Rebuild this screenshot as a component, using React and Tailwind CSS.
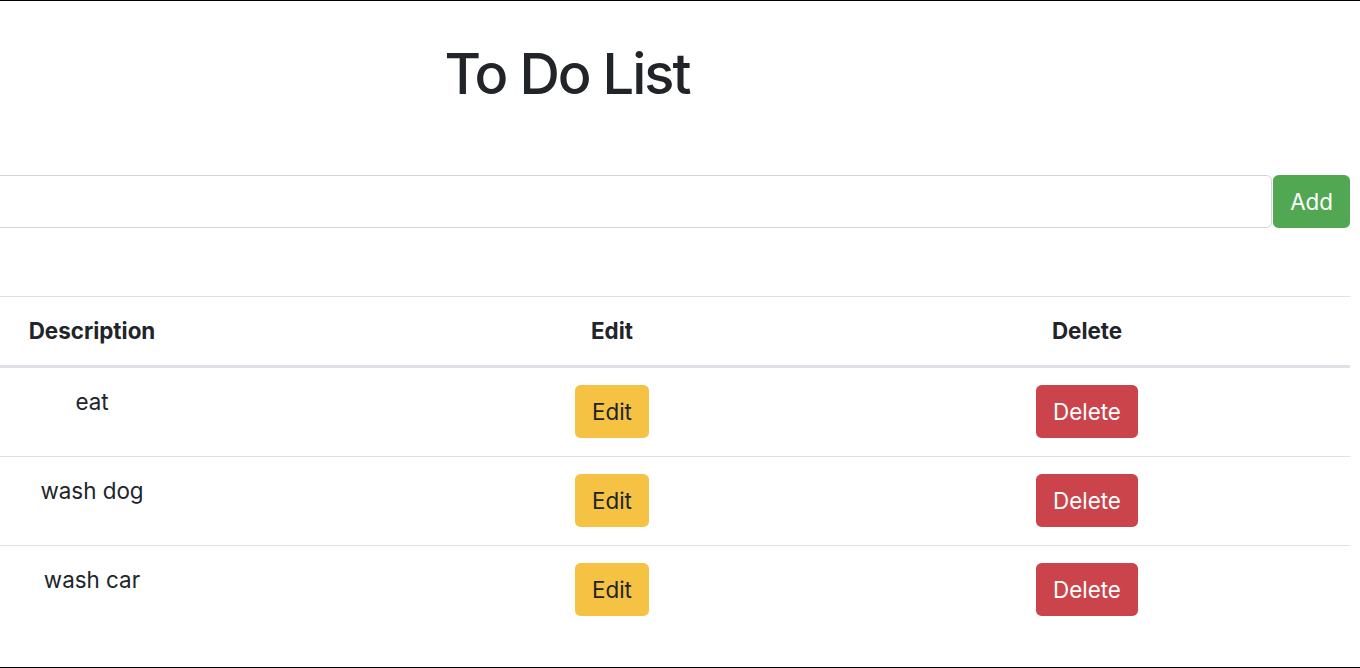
import React from 'react';

const todos = ['eat', 'wash dog', 'wash car'];

export default function App() {
  return (
    <div
      className="h-[668px] w-[1360px] overflow-hidden border-y border-black bg-white text-[#212529]"
      style={{ fontFamily: 'Inter, "Liberation Sans", sans-serif' }}
    >
      <div className="ml-[-216px] w-[1566px]">
        <h1 className="mt-[40px] text-center text-[56px] font-medium leading-[1.2] tracking-[-2px]">To Do List</h1>

        <div className="mt-[67px] flex gap-px">
          <input
            type="text"
            className="h-[53px] flex-1 rounded-[5.6px] border border-[#ced4da] px-4 text-[22.4px] outline-none"
          />
          <button className="h-[53px] rounded-[5.6px] bg-[#52a852] px-[17px] text-[22.4px] leading-[1.5] text-white">
            Add
          </button>
        </div>

        <table className="mt-[68px] w-full table-fixed border-collapse text-[22.4px] leading-[34px]">
          <colgroup>
            <col className="w-[616px]" />
            <col className="w-[424px]" />
            <col className="w-[526px]" />
          </colgroup>
          <thead>
            <tr>
              <th className="border-t border-b-[3px] border-[#dee2e6] px-[17px] py-[17px] text-center font-bold">Description</th>
              <th className="border-t border-b-[3px] border-[#dee2e6] px-[17px] py-[17px] text-center font-bold">Edit</th>
              <th className="border-t border-b-[3px] border-[#dee2e6] px-[17px] py-[17px] text-center font-bold">Delete</th>
            </tr>
          </thead>
          <tbody>
            {todos.map((t, i) => (
              <tr key={t}>
                <td className={`${i > 0 ? 'border-t border-[#dee2e6]' : ''} px-[17px] pt-[17px] pb-[18px] text-center align-top`}>{t}</td>
                <td className={`${i > 0 ? 'border-t border-[#dee2e6]' : ''} px-[17px] pt-[17px] pb-[18px] text-center align-top`}>
                  <button className="h-[53px] rounded-[5.6px] bg-[#f6c244] px-[16.8px] leading-[1.5] text-[#212529]">Edit</button>
                </td>
                <td className={`${i > 0 ? 'border-t border-[#dee2e6]' : ''} px-[17px] pt-[17px] pb-[18px] text-center align-top`}>
                  <button className="h-[53px] rounded-[5.6px] bg-[#cc444b] px-[16.8px] leading-[1.5] text-white">Delete</button>
                </td>
              </tr>
            ))}
          </tbody>
        </table>
      </div>
    </div>
  );
}
